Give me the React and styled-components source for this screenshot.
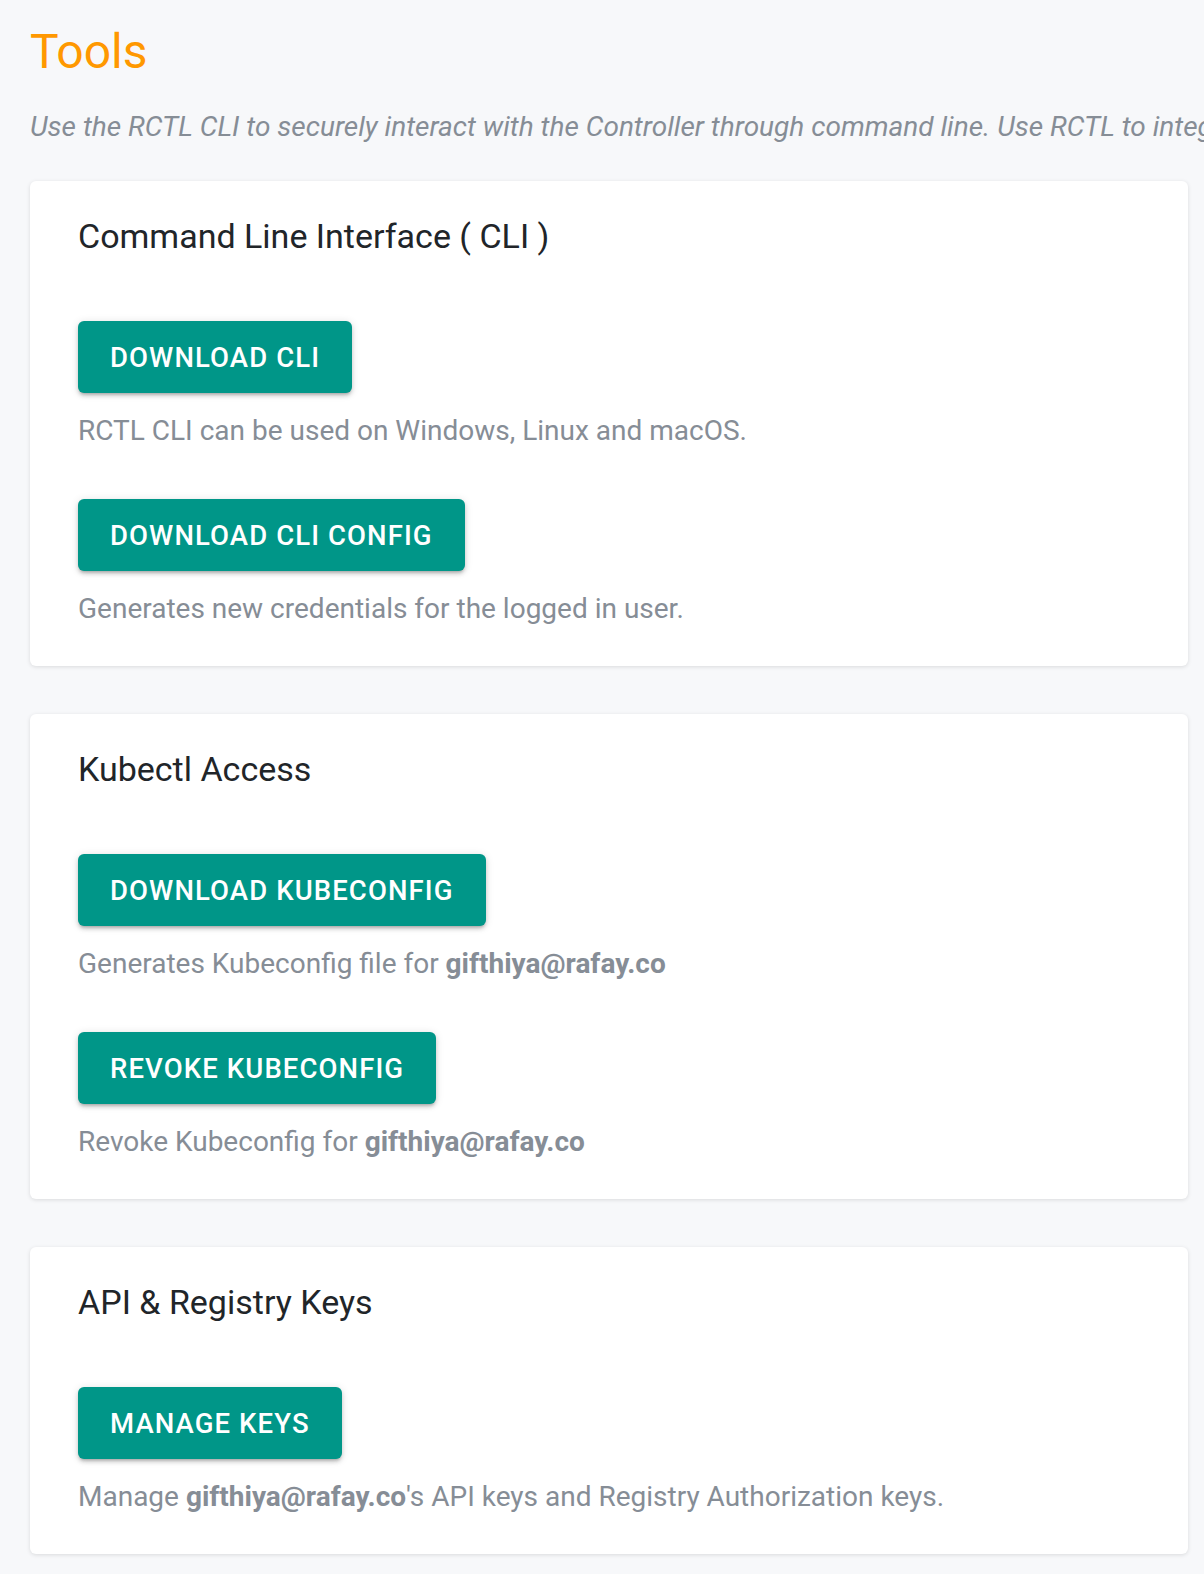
import React from 'react';
import styled, { createGlobalStyle } from 'styled-components';

const GlobalStyle = createGlobalStyle`
  html, body {
    margin: 0;
    padding: 0;
    background: #f7f8fa;
  }
  body {
    font-family: Roboto, "Liberation Sans", sans-serif;
    overflow-x: hidden;
  }
`;

const Page = styled.div`
  padding: 22px 16px 24px 30px;
  overflow: hidden;
`;

const Title = styled.h1`
  margin: 0;
  font-size: 48px;
  font-weight: 400;
  line-height: 60px;
  color: #ff9800;
`;

const Subtitle = styled.p`
  margin: 27px 0 36px;
  font-size: 28px;
  line-height: 36px;
  font-style: italic;
  color: #868d96;
  white-space: nowrap;
`;

const Card = styled.section`
  background: #fff;
  border-radius: 6px;
  box-shadow: 0 1px 4px rgba(0, 0, 0, 0.12);
  padding: 36px 48px 37px;
  margin-bottom: 48px;
`;

const CardTitle = styled.h2`
  margin: 0 0 66px;
  font-size: 34px;
  font-weight: 400;
  line-height: 38px;
  color: #212529;
`;

const Item = styled.div`
  & + & {
    margin-top: 48px;
  }
`;

const Button = styled.button`
  display: inline-flex;
  align-items: center;
  height: 72px;
  padding: 0 32px;
  border: none;
  border-radius: 6px;
  background: #009688;
  color: #fff;
  font-family: Roboto, "Liberation Sans", sans-serif;
  font-size: 27.5px;
  font-weight: 500;
  letter-spacing: 1.1px;
  text-transform: uppercase;
  box-shadow: 0 3px 3px -2px rgba(0, 0, 0, 0.2), 0 3px 4px 0 rgba(0, 0, 0, 0.14),
    0 1px 8px 0 rgba(0, 0, 0, 0.12);
  cursor: pointer;
`;

const Desc = styled.p`
  margin: 18px 0 0;
  font-size: 28px;
  line-height: 40px;
  color: #868d96;

  b {
    font-weight: 700;
  }
`;

const email = 'gifthiya@rafay.co';

const sections = [
  {
    title: 'Command Line Interface ( CLI )',
    items: [
      { label: 'Download CLI', desc: <>RCTL CLI can be used on Windows, Linux and macOS.</> },
      { label: 'Download CLI Config', desc: <>Generates new credentials for the logged in user.</> },
    ],
  },
  {
    title: 'Kubectl Access',
    items: [
      { label: 'Download Kubeconfig', desc: <>Generates Kubeconfig file for <b>{email}</b></> },
      { label: 'Revoke Kubeconfig', desc: <>Revoke Kubeconfig for <b>{email}</b></> },
    ],
  },
  {
    title: 'API & Registry Keys',
    items: [
      {
        label: 'Manage Keys',
        desc: <>Manage <b>{email}</b>'s API keys and Registry Authorization keys.</>,
      },
    ],
  },
];

const App = () => {
  return (
    <>
      <GlobalStyle />
      <Page>
        <Title>Tools</Title>
        <Subtitle>
          Use the RCTL CLI to securely interact with the Controller through command line. Use RCTL to integrate with your automation pipelines.
        </Subtitle>
        {sections.map((section) => (
          <Card key={section.title}>
            <CardTitle>{section.title}</CardTitle>
            {section.items.map((item) => (
              <Item key={item.label}>
                <Button>{item.label}</Button>
                <Desc>{item.desc}</Desc>
              </Item>
            ))}
          </Card>
        ))}
      </Page>
    </>
  );
};

export default App;
